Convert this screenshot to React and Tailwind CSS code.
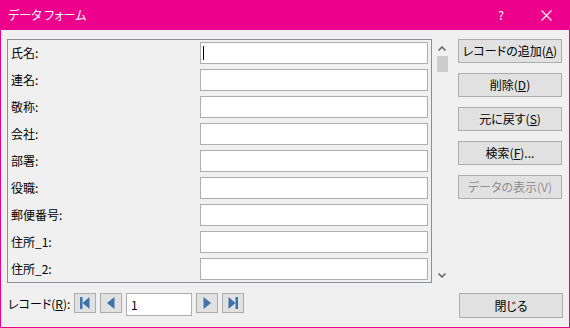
import React from "react";

const fields = ["氏名:", "連名:", "敬称:", "会社:", "部署:", "役職:", "郵便番号:", "住所_1:", "住所_2:"];

function Btn({ children, disabled, className = "" }) {
  return (
    <div
      className={`w-[104px] h-[24px] flex items-center justify-center border border-[#adadad] bg-[#e1e1e1] text-[12px] whitespace-nowrap leading-none ${
        disabled ? "text-[#8f8f8f]" : "text-black"
      } ${className}`}
    >
      {children}
    </div>
  );
}

function NavBtn({ children }) {
  return (
    <div className="w-[22px] h-[20px] flex items-center justify-center border border-[#adadad] bg-[#e1e1e1]">
      <svg width="12" height="12" viewBox="0 0 12 12" fill="#3f72a9">
        {children}
      </svg>
    </div>
  );
}

export default function App() {
  return (
    <div className="w-[570px] h-[328px] flex flex-col bg-[#f0f0f0] border border-t-0 border-[#ec008c] font-['Noto_Sans_CJK_JP',sans-serif] [font-feature-settings:'palt'] text-[12px] text-black overflow-hidden">
      {/* Title bar */}
      <div className="h-[30px] shrink-0 flex items-center bg-[#ec008c] text-white -mx-px">
        <span className="pl-[8px] text-[12px] leading-none whitespace-nowrap">データ フォーム</span>
        <span className="ml-auto mr-[37px] text-[12px] leading-none">?</span>
        <svg className="mr-[18px]" width="11" height="11" viewBox="0 0 11 11" stroke="white" strokeWidth="1.1">
          <path d="M0.5 0.5 L10.5 10.5 M10.5 0.5 L0.5 10.5" />
        </svg>
      </div>

      <div className="flex flex-col pl-[6px] pt-[9px]">
        <div className="flex">
          {/* Record group */}
          <div className="w-[425px] h-[244px] border border-[#8a8d91] pt-[2px] flex flex-col gap-[5px]">
            {fields.map((f, i) => (
              <div key={f} className="flex items-center h-[22px]">
                <span className="w-[192px] pl-[3px] leading-none whitespace-nowrap">{f}</span>
                <div className="relative w-[228px] h-[22px] border border-[#adadad] bg-white">
                  {i === 0 && <span className="absolute left-[2px] top-[3px] w-px h-[14px] bg-black" />}
                </div>
              </div>
            ))}
          </div>

          {/* Scrollbar */}
          <div className="w-[20px] h-[244px] flex flex-col items-center">
            <svg className="mt-[7px]" width="8" height="5" viewBox="0 0 8 5" fill="none" stroke="#606060" strokeWidth="1.5">
              <path d="M0.5 4.5 L4 1 L7.5 4.5" />
            </svg>
            <div className="mt-[5px] w-[11px] h-[16px] bg-[#cdcdcd]" />
            <svg className="mt-auto mb-[5px]" width="8" height="5" viewBox="0 0 8 5" fill="none" stroke="#606060" strokeWidth="1.5">
              <path d="M0.5 0.5 L4 4 L7.5 0.5" />
            </svg>
          </div>

          {/* Buttons */}
          <div className="ml-[6px] flex flex-col gap-[10px]">
            <Btn>
              レコードの追加(<u>A</u>)
            </Btn>
            <Btn>
              削除(<u>D</u>)
            </Btn>
            <Btn>
              元に戻す(<u>S</u>)
            </Btn>
            <Btn>
              検索(<u>F</u>)...
            </Btn>
            <Btn disabled>データの表示(V)</Btn>
          </div>
        </div>

        {/* Bottom row */}
        <div className="flex items-start mt-[10px]">
          <span className="w-[67px] pt-[5px] pl-px leading-none whitespace-nowrap">
            レコード(<u>R</u>):
          </span>
          <div className="flex gap-[4px]">
            <NavBtn>
              <rect x="1" y="0" width="2.5" height="12" />
              <path d="M3.5 6 L10.5 0 L10.5 12 Z" />
            </NavBtn>
            <NavBtn>
              <path d="M2 6 L9.5 0 L9.5 12 Z" />
            </NavBtn>
            <div className="w-[66px] h-[23px] border border-[#adadad] bg-white flex items-center pl-[4px] leading-none">1</div>
            <NavBtn>
              <path d="M10 6 L2.5 0 L2.5 12 Z" />
            </NavBtn>
            <NavBtn>
              <path d="M8.5 6 L1.5 0 L1.5 12 Z" />
              <rect x="8.5" y="0" width="2.5" height="12" />
            </NavBtn>
          </div>
          <Btn className="ml-auto mr-[6px] h-[25px]">閉じる</Btn>
        </div>
      </div>
    </div>
  );
}
